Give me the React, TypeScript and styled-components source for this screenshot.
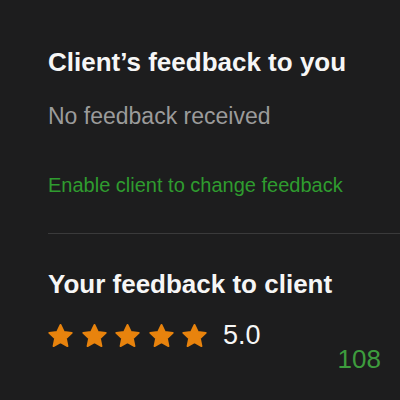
import React from "react";
import styled, { createGlobalStyle } from "styled-components";

const GlobalStyle = createGlobalStyle`
  html, body {
    margin: 0;
    padding: 0;
    background: #1d1d1e;
  }
  body {
    font-family: "Liberation Sans", Arial, sans-serif;
  }
`;

interface StarProps {
  size?: number;
}

const Star: React.FC<StarProps> = ({ size = 25 }) => (
  <svg width={size} height={size} viewBox="0 0 24 24" style={{ overflow: "visible" }}>
    <path
      d="M12 1.8L15.2 8.6 22.8 9.5 17.2 14.7 18.7 22.2 12 18.5 5.3 22.2 6.8 14.7 1.2 9.5 8.8 8.6z"
      fill="#e8830d"
      stroke="#e8830d"
      strokeWidth={1.8}
      strokeLinejoin="round"
    />
  </svg>
);

const Feedback: React.FC = () => {
  const rating = 5;
  return (
    <Container>
      <Title>Client’s feedback to you</Title>
      <Muted>No feedback received</Muted>
      <ActionLink>Enable client to change feedback</ActionLink>
      <Divider />
      <Title className="second">Your feedback to client</Title>
      <Footer>
        <RatingRow>
          <Stars>
            {Array.from({ length: 5 }).map((_, i) => (
              <Star key={i} />
            ))}
          </Stars>
          <Score>{rating.toFixed(1)}</Score>
        </RatingRow>
        <Counter>108</Counter>
      </Footer>
    </Container>
  );
};

export default function App() {
  return (
    <>
      <GlobalStyle />
      <Feedback />
    </>
  );
}

const Container = styled.div`
  width: 400px;
  height: 400px;
  box-sizing: border-box;
  padding: 47px 0 0 48px;
  background-color: #1d1d1e;
  display: flex;
  flex-direction: column;
  overflow: hidden;
  .second {
    margin-top: 35px;
  }
`;

const Title = styled.h2`
  margin: 0;
  font-size: 26px;
  line-height: 30px;
  font-weight: 700;
  color: #f6f6f6;
`;

const Muted = styled.p`
  margin: 26px 0 0;
  font-size: 23px;
  line-height: 27px;
  color: #9b9b9b;
`;

const ActionLink = styled.a`
  display: block;
  margin-top: 43px;
  font-size: 20px;
  line-height: 24px;
  color: #2f9c2f;
  cursor: pointer;
`;

const Divider = styled.hr`
  margin: 36px 0 0;
  border: none;
  height: 1px;
  background-color: #3a3a3b;
`;

const Footer = styled.div`
  display: flex;
  justify-content: space-between;
  align-items: flex-start;
  margin-top: 21px;
`;

const RatingRow = styled.div`
  display: flex;
  align-items: center;
  gap: 16px;
  height: 31px;
`;

const Stars = styled.div`
  display: flex;
  gap: 8.5px;
`;

const Score = styled.span`
  font-size: 27px;
  line-height: 31px;
  color: #f6f6f6;
`;

const Counter = styled.span`
  margin: 24px 19px 0 0;
  font-size: 26px;
  line-height: 30px;
  color: #3d9c3d;
`;
